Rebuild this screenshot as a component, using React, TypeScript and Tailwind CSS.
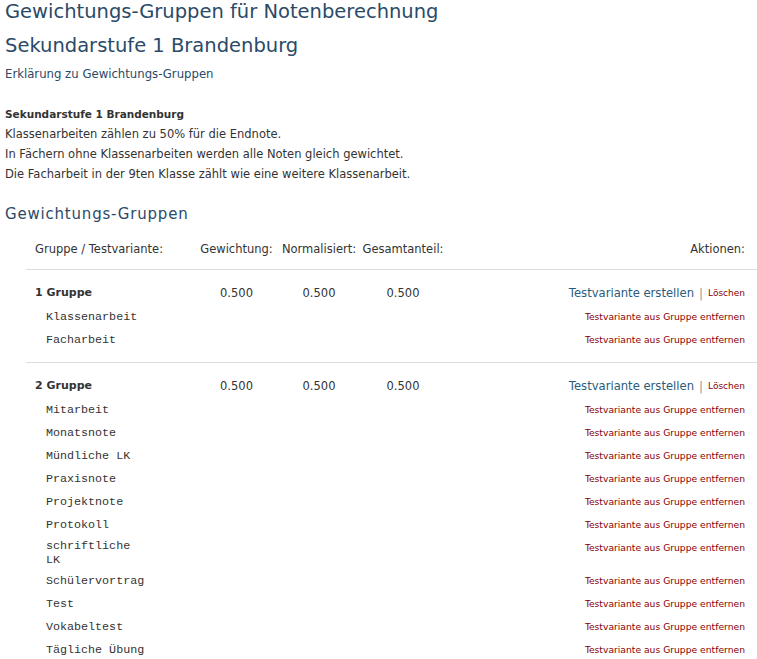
import React from "react";

type Sub = { name: string; wrap?: boolean };
type Group = { title: string; g: string; n: string; s: string; subs: Sub[] };

const groups: Group[] = [
  {
    title: "1 Gruppe",
    g: "0.500",
    n: "0.500",
    s: "0.500",
    subs: [{ name: "Klassenarbeit" }, { name: "Facharbeit" }],
  },
  {
    title: "2 Gruppe",
    g: "0.500",
    n: "0.500",
    s: "0.500",
    subs: [
      { name: "Mitarbeit" },
      { name: "Monatsnote" },
      { name: "Mündliche LK" },
      { name: "Praxisnote" },
      { name: "Projektnote" },
      { name: "Protokoll" },
      { name: "schriftliche LK", wrap: true },
      { name: "Schülervortrag" },
      { name: "Test" },
      { name: "Vokabeltest" },
      { name: "Tägliche Übung" },
    ],
  },
];

const sans = "font-['DejaVu_Sans',sans-serif]";
const mono = "font-['Liberation_Mono',monospace]";

function GroupSection({ grp }: { grp: Group }) {
  return (
    <div className="border-t border-[#dddddd] pt-[12px] pb-[11px]">
      <div className="grid grid-cols-[170px_81px_84px_84px_1fr] h-[23px] items-center">
        <div className="pl-[9px] text-[11px] font-bold text-[#333333]">{grp.title}</div>
        <div className="text-center text-[11.5px] text-[#333333]">{grp.g}</div>
        <div className="text-center text-[11.5px] text-[#333333]">{grp.n}</div>
        <div className="text-center text-[11.5px] text-[#333333]">{grp.s}</div>
        <div className="flex items-center justify-end pr-[12px]">
          <span className="text-[11.6px] text-[#2b5b7b]">Testvariante erstellen</span>
          <span className="mx-[5px] text-[12px] text-[#999999]">|</span>
          <span className="text-[9px] text-[#8b0000]">Löschen</span>
        </div>
      </div>
      {grp.subs.map((s) => (
        <div key={s.name} className="flex justify-between">
          <div className="flex min-h-[23px] items-center py-[2.5px] pl-[20px]">
            <span className={`${mono} block w-[102px] text-[11.7px] leading-[14px] text-[#333333]`}>
              {s.name}
            </span>
          </div>
          <div className="pt-[4.5px] pr-[12px] text-[9.2px] leading-[14px] text-[#8b0000]">
            Testvariante aus Gruppe entfernen
          </div>
        </div>
      ))}
    </div>
  );
}

export default function App() {
  return (
    <div className={`${sans} bg-white w-[757px] min-h-[659px] text-[#333333]`}>
      <div className="pl-[5px]">
        <h1 className="text-[19.5px] leading-[24px] text-[#2a4a68]">
          Gewichtungs-Gruppen für Notenberechnung
        </h1>
        <h2 className="mt-[10px] text-[19.5px] leading-[24px] text-[#2a4a68]">
          Sekundarstufe 1 Brandenburg
        </h2>
        <div className="mt-[6px] text-[11.7px] leading-[20px] text-[#2a4a68]">
          Erklärung zu Gewichtungs-Gruppen
        </div>
        <div className="mt-[20px] text-[11.5px] leading-[20px]">
          <div className="text-[10.5px] font-bold">Sekundarstufe 1 Brandenburg</div>
          <div>Klassenarbeiten zählen zu 50% für die Endnote.</div>
          <div>In Fächern ohne Klassenarbeiten werden alle Noten gleich gewichtet.</div>
          <div>Die Facharbeit in der 9ten Klasse zählt wie eine weitere Klassenarbeit.</div>
        </div>
        <h3 className="mt-[18px] text-[15px] leading-[24px] tracking-[0.8px] text-[#2a4a68]">
          Gewichtungs-Gruppen
        </h3>
      </div>
      <div className="ml-[26px] mt-[13px]">
        <div className="grid grid-cols-[170px_81px_84px_84px_1fr] pb-[10px] text-[11.5px] leading-[20px] text-[#333333]">
          <div className="pl-[9px]">Gruppe / Testvariante:</div>
          <div className="text-center">Gewichtung:</div>
          <div className="text-center">Normalisiert:</div>
          <div className="text-center">Gesamtanteil:</div>
          <div className="pr-[12px] text-right">Aktionen:</div>
        </div>
        {groups.map((g) => (
          <GroupSection key={g.title} grp={g} />
        ))}
      </div>
    </div>
  );
}
